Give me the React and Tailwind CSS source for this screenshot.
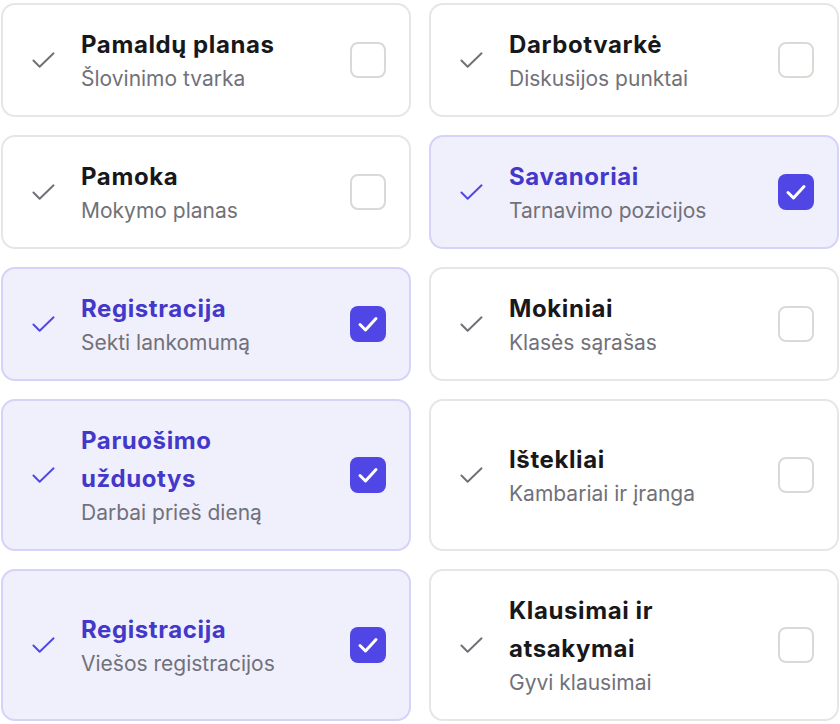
import React, { useState } from 'react';

const items = [
  { id: 1, title: 'Pamaldų planas', sub: 'Šlovinimo tvarka', on: false },
  { id: 2, title: 'Darbotvarkė', sub: 'Diskusijos punktai', on: false },
  { id: 3, title: 'Pamoka', sub: 'Mokymo planas', on: false },
  { id: 4, title: 'Savanoriai', sub: 'Tarnavimo pozicijos', on: true },
  { id: 5, title: 'Registracija', sub: 'Sekti lankomumą', on: true },
  { id: 6, title: 'Mokiniai', sub: 'Klasės sąrašas', on: false },
  { id: 7, title: 'Paruošimo užduotys', sub: 'Darbai prieš dieną', on: true },
  { id: 8, title: 'Ištekliai', sub: 'Kambariai ir įranga', on: false },
  { id: 9, title: 'Registracija', sub: 'Viešos registracijos', on: true },
  { id: 10, title: 'Klausimai ir atsakymai', sub: 'Gyvi klausimai', on: false },
];

function Tick({ className }) {
  return (
    <svg viewBox="0 0 24 16" className={className} fill="none" stroke="currentColor" strokeWidth="2" strokeLinecap="round" strokeLinejoin="round">
      <path d="M1.5 8.5 8 15 22.5 1" />
    </svg>
  );
}

function Card({ item, onToggle }) {
  const on = item.on;
  return (
    <button
      onClick={onToggle}
      className={`flex items-center text-left rounded-[14px] border-2 pl-[29px] pr-[23px] py-[21px] ${
        on ? 'bg-[#f0effc] border-[#d6d2f8]' : 'bg-white border-[#e6e6e2]'
      }`}
    >
      <Tick className={`w-[23px] h-[16px] shrink-0 ${on ? 'text-[#4f46e5]' : 'text-[#6f6f76]'}`} />
      <div className="flex-1 min-w-0 ml-[26px] mr-6">
        <div className={`text-[24px] leading-[38px] font-bold tracking-[0.6px] ${on ? 'text-[#4338ca]' : 'text-[#18181b]'}`}>
          {item.title}
        </div>
        <div className="text-[21px] leading-[30px] text-[#71717a]">{item.sub}</div>
      </div>
      <div
        className={`w-9 h-9 shrink-0 rounded-[8px] flex items-center justify-center ${
          on ? 'bg-[#4f46e5]' : 'border-2 border-[#d9d9d6] bg-white'
        }`}
      >
        {on && (
          <svg viewBox="0 0 36 36" className="w-9 h-9" fill="none" stroke="white" strokeWidth="3" strokeLinecap="round" strokeLinejoin="round">
            <path d="M10 18.5 15.5 24 26 12.5" />
          </svg>
        )}
      </div>
    </button>
  );
}

export default function App() {
  const [list, setList] = useState(items);
  const toggle = (id) => setList((l) => l.map((x) => (x.id === id ? { ...x, on: !x.on } : x)));

  return (
    <div className="w-[840px] bg-white px-px pt-[3px]" style={{ fontFamily: 'Inter, "Noto Sans", sans-serif' }}>
      <div className="grid grid-cols-2 gap-[18px]">
        {list.map((item) => (
          <Card key={item.id} item={item} onToggle={() => toggle(item.id)} />
        ))}
      </div>
    </div>
  );
}
